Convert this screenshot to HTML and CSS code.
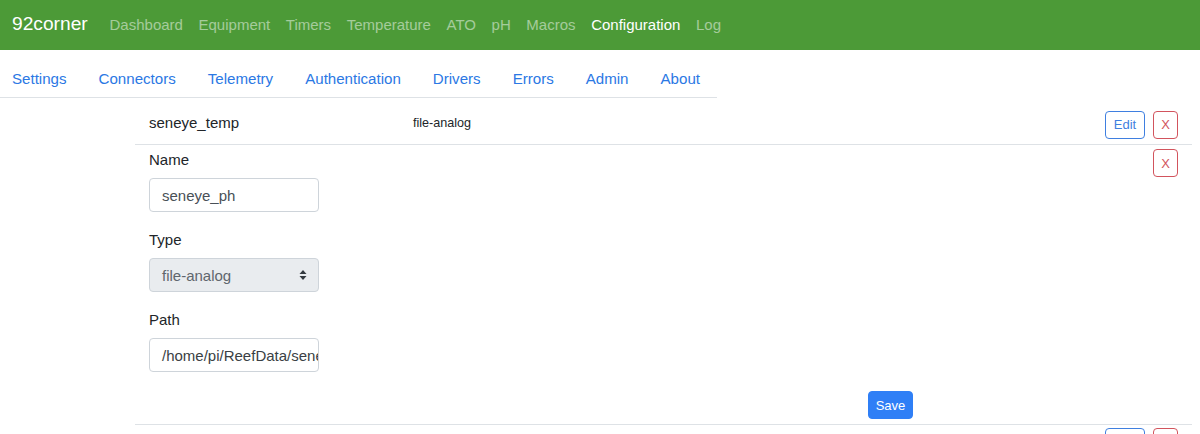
FILE: index.html
```html
<!DOCTYPE html>
<html>
<head>
<meta charset="utf-8">
<link rel="stylesheet" href="styles.css">
</head>
<body>
<header class="navbar">
  <a class="brand">92corner</a>
  <nav class="mainnav">
    <a class="nav-link">Dashboard</a>
    <a class="nav-link">Equipment</a>
    <a class="nav-link">Timers</a>
    <a class="nav-link">Temperature</a>
    <a class="nav-link">ATO</a>
    <a class="nav-link">pH</a>
    <a class="nav-link">Macros</a>
    <a class="nav-link active">Configuration</a>
    <a class="nav-link">Log</a>
  </nav>
</header>
<nav class="tabs">
  <a class="tab">Settings</a>
  <a class="tab">Connectors</a>
  <a class="tab">Telemetry</a>
  <a class="tab">Authentication</a>
  <a class="tab">Drivers</a>
  <a class="tab">Errors</a>
  <a class="tab">Admin</a>
  <a class="tab">About</a>
</nav>
<main class="content">
  <div class="item-row">
    <span class="item-name">seneye_temp</span>
    <span class="item-type">file-analog</span>
    <div class="actions">
      <button class="btn btn-edit">Edit</button>
      <button class="btn btn-del">X</button>
    </div>
  </div>
  <div class="form-row">
    <div class="form-body">
      <div class="fields">
        <label class="label">Name</label>
        <div class="input">seneye_ph</div>
        <label class="label">Type</label>
        <div class="input select">file-analog
          <svg class="arrows" width="8" height="12" viewBox="0 0 8 12"><path d="M4 1 L7.5 5 H0.5 Z M4 11 L7.5 7 H0.5 Z" fill="#343a40"/></svg>
        </div>
        <label class="label">Path</label>
        <div class="input path">/home/pi/ReefData/seneye_ph</div>
      </div>
      <div class="save-row"><button class="btn btn-save">Save</button></div>
    </div>
    <button class="btn btn-del">X</button>
  </div>
  <div class="item-row last">
    <div class="actions">
      <button class="btn btn-edit">Edit</button>
      <button class="btn btn-del">X</button>
    </div>
  </div>
</main>
</body>
</html>
```
FILE: styles.css
```css
html, body {
  margin: 0;
  padding: 0;
  background: #fff;
  font-family: "Liberation Sans", Arial, sans-serif;
  color: #212529;
  overflow: hidden;
}
.navbar {
  display: flex;
  align-items: center;
  height: 50px;
  padding: 0 12px 2px;
  box-sizing: border-box;
  background: #4c9a37;
}
.brand {
  font-size: 19.2px;
  color: #fff;
  margin-right: 14px;
}
.mainnav {
  display: flex;
}
.nav-link {
  padding: 0 7.8px;
  font-size: 15px;
  color: rgba(255, 255, 255, 0.5);
}
.nav-link.active {
  color: #fff;
}
.tabs {
  display: flex;
  width: 705px;
  margin-top: 10px;
  padding-left: 12px;
  border-bottom: 1px solid #dee2e6;
}
.tab {
  padding: 8px 16px 7px;
  font-size: 15.1px;
  line-height: 22px;
  color: #2b78e4;
}
.tab:first-child {
  padding-left: 0;
}
.content {
  margin: 0 8px 0 135px;
}
.item-row {
  display: flex;
  align-items: center;
  height: 46px;
  padding: 0 14px;
  border-bottom: 1px solid #dee2e6;
}
.item-name {
  width: 264px;
  font-size: 15px;
  margin-top: 3px;
}
.item-type {
  font-size: 12.6px;
  margin-top: 3px;
}
.actions {
  display: flex;
  gap: 8px;
  margin-left: auto;
  margin-top: 7px;
}
.btn {
  box-sizing: border-box;
  height: 28px;
  padding: 0 7px;
  border-radius: 4px;
  font-family: "Liberation Sans", Arial, sans-serif;
  font-size: 13px;
  background: #fff;
  cursor: pointer;
}
.btn-edit {
  width: 40px;
  border: 1px solid #3f7fe0;
  color: #3f7fe0;
}
.btn-del {
  width: 25px;
  padding: 0;
  border: 1px solid #d2545d;
  color: #d2545d;
}
.form-row {
  display: flex;
  align-items: flex-start;
  padding: 4px 14px 5px;
  border-bottom: 1px solid #dee2e6;
}
.form-body {
  flex: 1;
}
.fields {
  display: flex;
  flex-direction: column;
  width: 170px;
}
.label {
  font-size: 15px;
  line-height: 22px;
  margin-bottom: 7px;
}
.input {
  box-sizing: border-box;
  display: flex;
  align-items: center;
  position: relative;
  height: 34px;
  padding: 0 12px;
  margin-bottom: 17px;
  border: 1px solid #ced4da;
  border-radius: 4px;
  font-size: 15px;
  color: #495057;
  white-space: nowrap;
  overflow: hidden;
}
.input.select {
  background: #e9ecef;
  color: #5f666d;
}
.arrows {
  position: absolute;
  right: 11px;
  top: 10px;
}
.input.path {
  margin-bottom: 0;
  color: #3a3f44;
}
.save-row {
  display: flex;
  margin-top: 19px;
  padding-left: 719px;
}
.btn-save {
  width: 45px;
  padding: 0;
  border: 1px solid #2f7ff6;
  background: #2f7ff6;
  color: #fff;
}
.item-row.last {
  border-bottom: none;
  align-items: flex-start;
  padding-top: 3px;
}
.item-row.last .actions {
  margin-top: 0;
}
```
